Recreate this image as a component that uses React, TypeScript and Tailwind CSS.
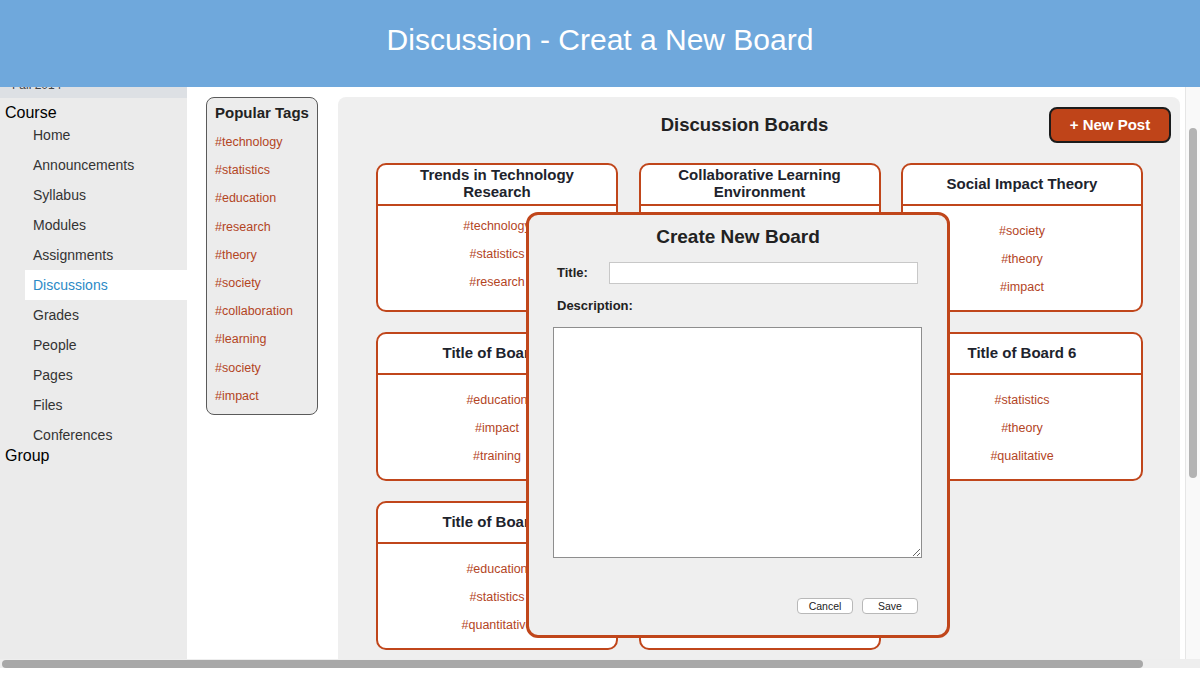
const navItems = ["Home", "Announcements", "Syllabus", "Modules", "Assignments", "Discussions", "Grades", "People", "Pages", "Files", "Conferences"];

const popularTags = ["#technology", "#statistics", "#education", "#research", "#theory", "#society", "#collaboration", "#learning", "#society", "#impact"];

interface Board {
    title: string,
    tags: string[],
    compact?: boolean,
}

const boards: Board[] = [
    { title: "Trends in Technology Research", tags: ["#technology", "#statistics", "#research"], compact: true },
    { title: "Collaborative Learning Environment", tags: ["#collaboration", "#learning", "#education"], compact: true },
    { title: "Social Impact Theory", tags: ["#society", "#theory", "#impact"] },
    { title: "Title of Board 4", tags: ["#education", "#impact", "#training"] },
    { title: "Title of Board 5", tags: ["#research", "#theory", "#learning"] },
    { title: "Title of Board 6", tags: ["#statistics", "#theory", "#qualitative"] },
    { title: "Title of Board 7", tags: ["#education", "#statistics", "#quantitative"] },
    { title: "Title of Board 8", tags: ["#society", "#learning", "#impact"] },
];

const BoardCard = ({ board }: { board: Board }) => (
    <div className="h-[149px] rounded-[10px] border-2 border-[#c0461b] bg-white overflow-hidden">
        <div className="h-[41px] pb-[3px] border-b-2 border-[#c0461b] flex items-center justify-center text-center px-6 text-[15px] leading-[17px] font-bold text-[#20232c]">
            {board.title}
        </div>
        <div className={"flex flex-col items-center " + (board.compact ? "pt-[6px]" : "pt-[11px]")}>
            {board.tags.map((tag, i) => (
                <span key={i} className="text-[12.5px] leading-[28px] text-[#b3451f]">{tag}</span>
            ))}
        </div>
    </div>
);

const Sidebar = () => (
    <div className="w-[187px] shrink-0 bg-[#ebebeb] text-[#333]">
        <div className="h-[11px] overflow-hidden bg-[#dde0e4]">
            <div className="-mt-[9px] pl-[12px] text-[12px] leading-[14px] text-[#444]">Fall 2014</div>
        </div>
        <div className="h-[22px] pt-[7px] pl-[5px] text-[16px] leading-[15px] text-black">Course</div>
        {navItems.map(item => (
            <div
                key={item}
                className={"h-[30px] ml-[25px] pl-[8px] flex items-center text-[14px] " + (item === "Discussions" ? "bg-white text-[#2b8ac6]" : "")}
            >
                {item}
            </div>
        ))}
        <div className="pl-[5px] -mt-[3px] text-[16px] leading-[18px] text-black">Group</div>
    </div>
);

const CreateBoardModal = () => (
    <div className="absolute left-[526px] top-[212px] w-[424px] h-[426px] rounded-[12px] border-[3px] border-[#c0461b] bg-[#efefef] text-[#222]">
        <h2 className="pt-[11px] text-center text-[19px] leading-[22px] font-bold">Create New Board</h2>
        <div className="mt-[14px] pl-[28px] flex items-center h-[22px]">
            <label className="w-[52px] text-[13px] font-bold">Title:</label>
            <input type="text" className="w-[309px] h-[22px] bg-white border border-[#c8c8c8] outline-none" />
        </div>
        <div className="mt-[14px] pl-[28px] text-[13px] leading-[16px] font-bold">Description:</div>
        <textarea className="block mt-[13px] ml-[24px] w-[369px] h-[231px] bg-white border border-[#8e8e8e] outline-none" />
        <div className="mt-[40px] pr-[29px] flex justify-end gap-[9px]">
            <button className="w-[56px] h-[16px] rounded-[4px] border border-[#b8b8b8] bg-white text-[10.5px] leading-[14px] text-[#222]">Cancel</button>
            <button className="w-[56px] h-[16px] rounded-[4px] border border-[#b8b8b8] bg-white text-[10.5px] leading-[14px] text-[#222]">Save</button>
        </div>
    </div>
);

export default function App() {
    return (
        <div className="relative w-[1200px] h-[676px] overflow-hidden bg-white" style={{ fontFamily: '"Liberation Sans", Arial, sans-serif' }}>
            <header className="h-[87px] pb-[9px] bg-[#6fa8dc] flex items-center justify-center text-white text-[30px] font-light">
                Discussion - Creat a New Board
            </header>
            <div className="flex h-[572px] overflow-hidden">
                <Sidebar />
                <main className="w-[998px] shrink-0 bg-white flex items-start gap-[20px] pt-[10px] pl-[19px]">
                    <div className="w-[112px] h-[318px] shrink-0 rounded-[8px] border border-[#5a5a5a] bg-[#ececec] pl-[8px]">
                        <h3 className="pt-[5px] text-[15px] leading-[20px] font-bold text-[#222]">Popular Tags</h3>
                        <div className="pt-[5px] flex flex-col">
                            {popularTags.map((tag, i) => (
                                <span key={i} className="text-[12.5px] leading-[28.2px] text-[#b3451f]">{tag}</span>
                            ))}
                        </div>
                    </div>
                    <section className="w-[842px] h-[700px] shrink-0 rounded-t-[8px] bg-[#efefef] pl-[38px] pr-[9px]">
                        <div className="flex items-center pt-[10px]">
                            <h2 className="flex-1 pl-[64px] text-center text-[18.5px] font-bold text-[#222]">Discussion Boards</h2>
                            <button className="w-[122px] h-[36px] rounded-[8px] border-2 border-[#1c1c1c] bg-[#bf4419] text-white text-[15px] font-bold">
                                + New Post
                            </button>
                        </div>
                        <div className="mt-[20px] w-[767px] grid grid-cols-3 gap-x-[20.5px] gap-y-[20px]">
                            {boards.map(b => <BoardCard key={b.title} board={b} />)}
                        </div>
                    </section>
                </main>
                <div className="w-[15px] shrink-0 border-l border-[#e6e6e6] bg-[#f9f9f9] flex justify-center">
                    <div className="mt-[41px] w-[8px] h-[350px] rounded-full bg-[#b3b3b3]" />
                </div>
            </div>
            <div className="h-[9px] bg-[#eeeeee] pl-[2px] flex items-center">
                <div className="w-[1141px] h-[8px] rounded-full bg-[#a8a8a8]" />
            </div>
            <CreateBoardModal />
        </div>
    );
}
